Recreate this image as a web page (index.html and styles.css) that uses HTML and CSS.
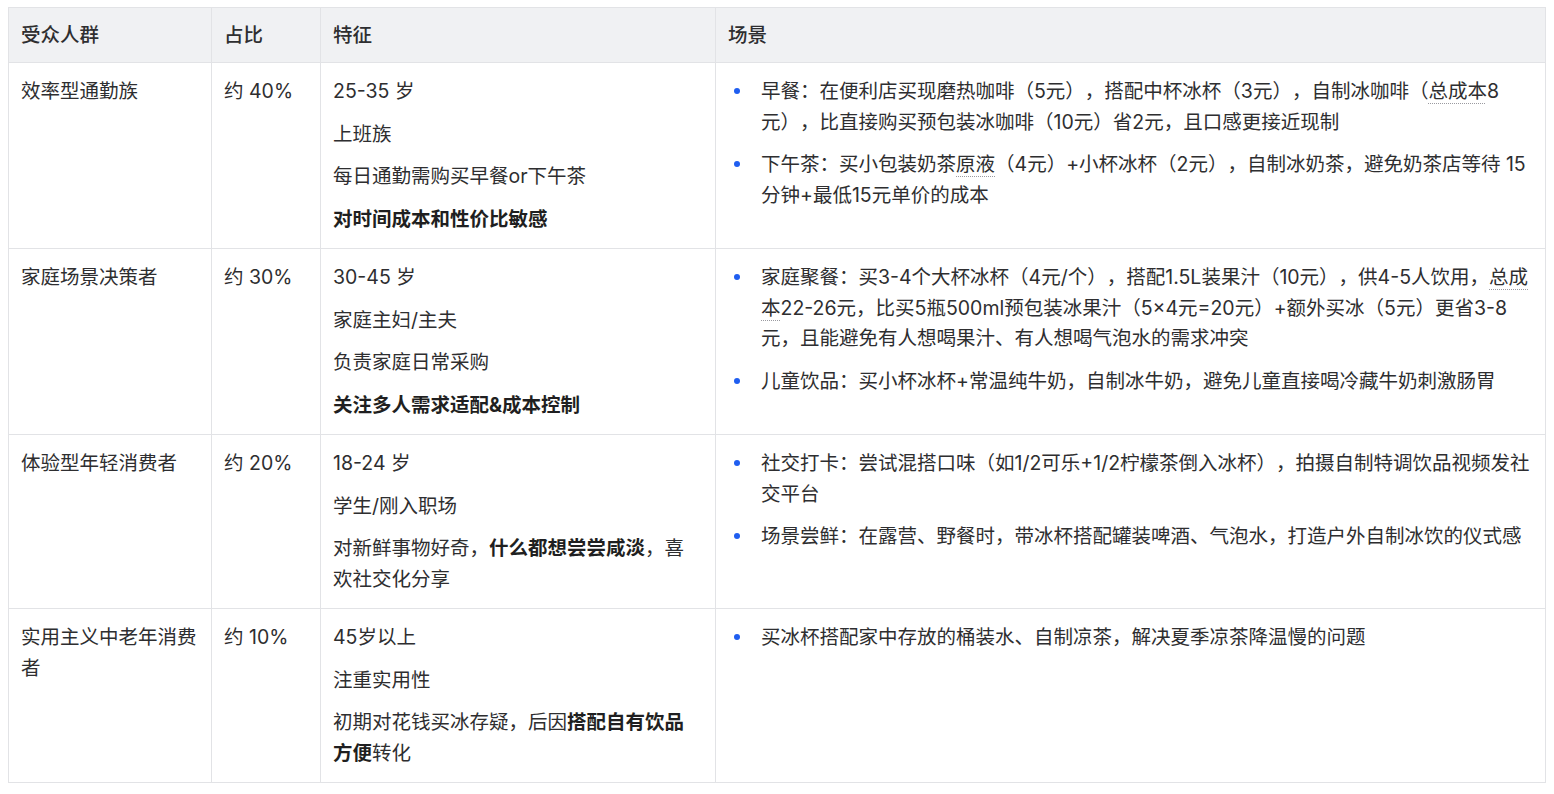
FILE: index.html
```html
<!DOCTYPE html>
<html lang="zh-CN">
<head>
<meta charset="utf-8">
<title>受众人群</title>
<link rel="stylesheet" href="styles.css">
</head>
<body>
<table class="grid">
  <colgroup>
    <col class="c1"><col class="c2"><col class="c3"><col class="c4">
  </colgroup>
  <thead>
    <tr><th>受众人群</th><th>占比</th><th>特征</th><th>场景</th></tr>
  </thead>
  <tbody>
    <tr>
      <td>效率型通勤族</td>
      <td>约 40%</td>
      <td>
        <p>25-35 岁</p>
        <p>上班族</p>
        <p>每日通勤需购买早餐or下午茶</p>
        <p><strong>对时间成本和性价比敏感</strong></p>
      </td>
      <td>
        <ul>
          <li>早餐：在便利店买现磨热咖啡（5元），搭配中杯冰杯（3元），自制冰咖啡（<span class="term">总成本</span>8元），比直接购买预包装冰咖啡（10元）省2元，且口感更接近现制</li>
          <li>下午茶：买小包装奶茶<span class="term">原液</span>（4元）+小杯冰杯（2元），自制冰奶茶，避免奶茶店等待 15 分钟+最低15元单价的成本</li>
        </ul>
      </td>
    </tr>
    <tr>
      <td>家庭场景决策者</td>
      <td>约 30%</td>
      <td>
        <p>30-45 岁</p>
        <p>家庭主妇/主夫</p>
        <p>负责家庭日常采购</p>
        <p><strong>关注多人需求适配&amp;成本控制</strong></p>
      </td>
      <td>
        <ul>
          <li>家庭聚餐：买3-4个大杯冰杯（4元/个），搭配1.5L装果汁（10元），供4-5人饮用，<span class="term">总成本</span>22-26元，比买5瓶500ml预包装冰果汁（5×4元=20元）+额外买冰（5元）更省3-8元，且能避免有人想喝果汁、有人想喝气泡水的需求冲突</li>
          <li>儿童饮品：买小杯冰杯+常温纯牛奶，自制冰牛奶，避免儿童直接喝冷藏牛奶刺激肠胃</li>
        </ul>
      </td>
    </tr>
    <tr>
      <td>体验型年轻消费者</td>
      <td>约 20%</td>
      <td>
        <p>18-24 岁</p>
        <p>学生/刚入职场</p>
        <p>对新鲜事物好奇，<strong>什么都想尝尝咸淡</strong>，喜欢社交化分享</p>
      </td>
      <td>
        <ul>
          <li>社交打卡：尝试混搭口味（如1/2可乐+1/2柠檬茶倒入冰杯），拍摄自制特调饮品视频发社交平台</li>
          <li>场景尝鲜：在露营、野餐时，带冰杯搭配罐装啤酒、气泡水，打造户外自制冰饮的仪式感</li>
        </ul>
      </td>
    </tr>
    <tr>
      <td>实用主义中老年消费者</td>
      <td>约 10%</td>
      <td>
        <p>45岁以上</p>
        <p>注重实用性</p>
        <p>初期对花钱买冰存疑，后因<strong>搭配自有饮品方便</strong>转化</p>
      </td>
      <td>
        <ul>
          <li>买冰杯搭配家中存放的桶装水、自制凉茶，解决夏季凉茶降温慢的问题</li>
        </ul>
      </td>
    </tr>
  </tbody>
</table>
</body>
</html>
```

FILE: styles.css
```css
html, body {
  margin: 0;
  padding: 0;
  background: #ffffff;
}

body {
  padding: 7px 9px 0 8px;
  font-family: Inter, "Noto Sans CJK SC", sans-serif;
  font-size: 19.5px;
  line-height: 30.75px;
  color: #2e2e30;
  text-spacing-trim: space-all;
}

.grid {
  width: 1537px;
  border-collapse: collapse;
  table-layout: fixed;
}

.c1 { width: 203px; }
.c2 { width: 109px; }
.c3 { width: 395px; }
.c4 { width: 830px; }

.grid th,
.grid td {
  border: 1px solid #e2e3e6;
  text-align: left;
  vertical-align: top;
  padding: 12px 12px 11px 12px;
}

.grid th {
  background: #f0f1f3;
  font-weight: 500;
  color: #2e2e30;
}

.grid td {
  padding-top: 13px;
  padding-bottom: 13px;
}

.grid p {
  margin: 0 0 12px 0;
}

.grid p:last-child {
  margin-bottom: 0;
}

.grid strong {
  font-weight: 700;
  color: #1f1f21;
}

.grid ul {
  margin: 0;
  padding: 0 0 0 33px;
  list-style: none;
}

.grid li {
  position: relative;
  margin: 0 0 12px 0;
}

.grid li:last-child {
  margin-bottom: 0;
}

.grid li::before {
  content: "";
  position: absolute;
  left: -27px;
  top: 12px;
  width: 6px;
  height: 6px;
  border-radius: 50%;
  background: #1f5ef0;
}

.term {
  text-decoration: underline dotted #9a9aa0;
  text-underline-offset: 5px;
  text-decoration-thickness: 1px;
}
```
